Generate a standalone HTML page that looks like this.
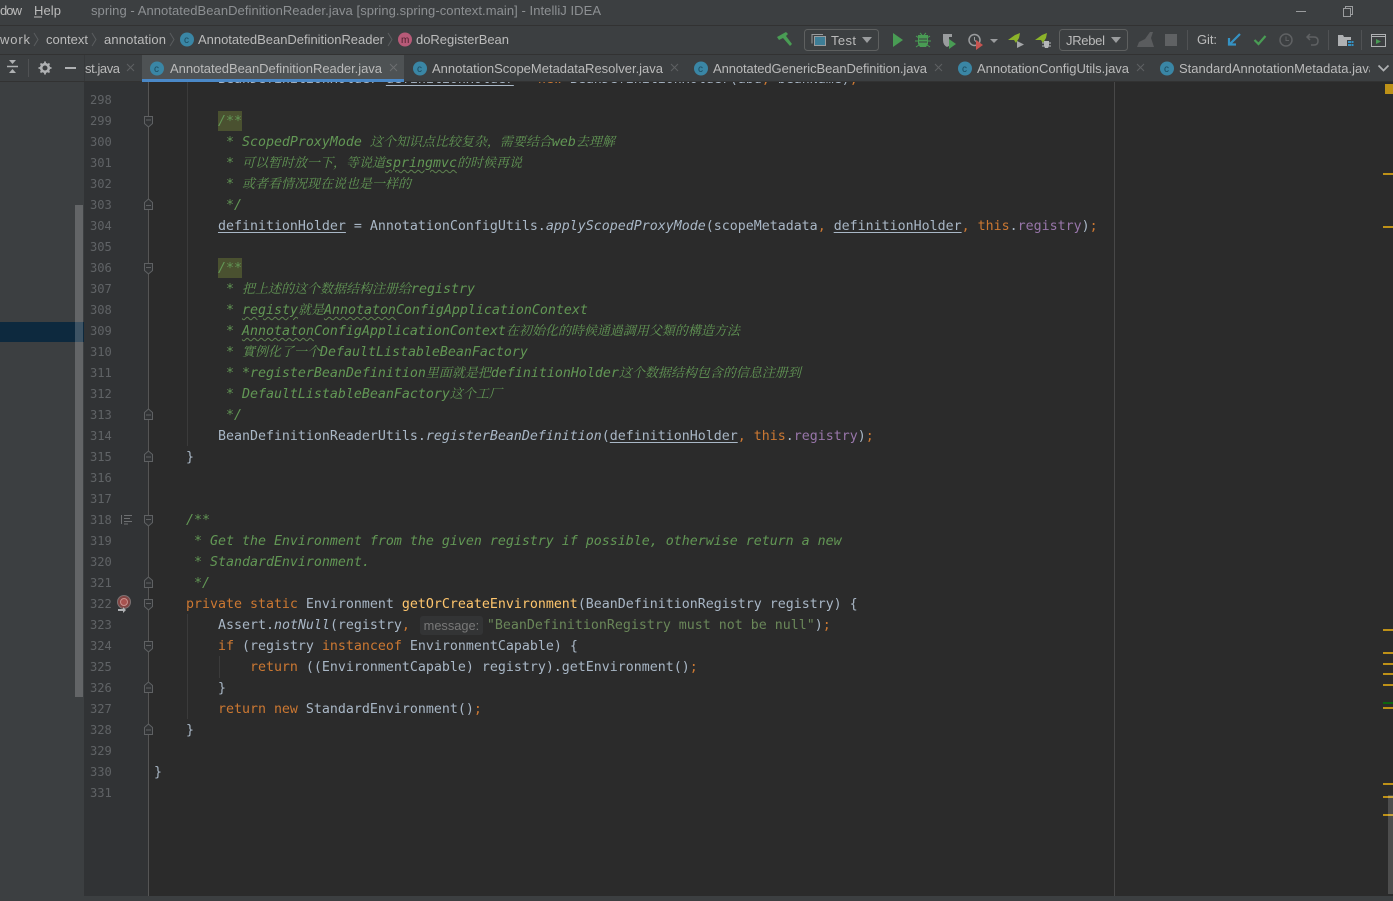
<!DOCTYPE html>
<html><head><meta charset="utf-8"><title>spring - AnnotatedBeanDefinitionReader.java</title>
<style>
html,body{margin:0;padding:0;width:1393px;height:901px;overflow:hidden;background:#2b2b2b}
.abs{position:absolute}
#left{left:0;top:82px;width:84px;height:814px;background:#3c3f41}
#sel{left:0;top:322px;width:84px;height:20px;background:#0d293e}
#lsb{left:75px;top:205px;width:8px;height:492px;background:rgba(255,255,255,.2)}
#gut{left:84px;top:82px;width:64px;height:814px;background:#313335}
#gl{left:148px;top:82px;width:1px;height:814px;background:#555}
#rm{left:1114px;top:82px;width:1px;height:814px;background:#484848}
#code{left:154px;width:1230px;height:828px;font:13.29px/21px "DejaVu Sans Mono","Liberation Mono",monospace;color:#a9b7c6;white-space:normal}
#clip{left:0;top:82px;width:1393px;height:814px;overflow:hidden}
#clip #code{top:-13px}
#code div{height:21px;white-space:pre}
#nums{left:90px;top:90px;font:12.1px/21px "DejaVu Sans Mono","Liberation Mono",monospace;color:#606366;white-space:pre}
.k{color:#cc7832}.d{color:#629755;font-style:italic}.m{color:#ffc66d}.s{color:#6a8759}.f{color:#9876aa}.i{font-style:italic}
.z{font-family:"Noto Serif CJK SC","Noto Sans CJK SC",serif;font-size:13px;line-height:13px}
.u{text-decoration:underline;text-underline-offset:2px;text-decoration-thickness:1px}
.w{text-decoration:underline wavy #5f8350 1px;text-underline-offset:2px}
.h{background:#4a5130;display:inline-block;height:20px;vertical-align:top}
.hint{display:inline-block;width:63px;height:19px;margin:1px 4px 0 2px;background:#333435;border-radius:3px;color:#787878;font:12.8px/19px "Liberation Sans",sans-serif;font-style:normal;text-align:center;vertical-align:top}
.st{position:absolute;left:1383px;width:10px;height:2px;background:#be9117}
.g{position:absolute;width:1px;background:#3b3b3b}
#status{left:0;top:896px;width:1393px;height:5px;background:#3c3f41}
#vsb{left:1388px;top:795px;width:5px;height:99px;background:rgba(255,255,255,.16)}
svg text{font-family:"Liberation Sans",sans-serif;font-size:13px;fill:#bbbbbb}
</style></head><body>
<div class="abs" id="left"></div><div class="abs" id="sel"></div><div class="abs" id="lsb"></div>
<div class="abs" id="gut"></div><div class="abs" id="gl"></div><div class="abs" id="rm"></div>
<div class="g" style="left:187px;top:82px;height:364px"></div>
<div class="g" style="left:187px;top:614px;height:105px"></div>
<div class="g" style="left:219px;top:656px;height:22px"></div>
<div class="abs" id="clip"><div class="abs" id="code"><div>        BeanDefinitionHolder <span class="u">definitionHolder</span> = <span class="k">new</span> BeanDefinitionHolder(abd<span class="k">,</span> beanName)<span class="k">;</span></div>
<div></div>
<div>        <span class="d"><span class="h">/**</span></span></div>
<div><span class="d">         * ScopedProxyMode <span class="z">这个知识点比较复杂，需要结合</span>web<span class="z">去理解</span></span></div>
<div><span class="d">         * <span class="z">可以暂时放一下，等说道</span><span class="w">springmvc</span><span class="z">的时候再说</span></span></div>
<div><span class="d">         * <span class="z">或者看情况现在说也是一样的</span></span></div>
<div><span class="d">         */</span></div>
<div>        <span class="u">definitionHolder</span> = AnnotationConfigUtils.<span class="i">applyScopedProxyMode</span>(scopeMetadata<span class="k">,</span> <span class="u">definitionHolder</span><span class="k">,</span> <span class="k">this</span>.<span class="f">registry</span>)<span class="k">;</span></div>
<div></div>
<div>        <span class="d"><span class="h">/**</span></span></div>
<div><span class="d">         * <span class="z">把上述的这个数据结构注册给</span>registry</span></div>
<div><span class="d">         * <span class="w">registy</span><span class="z">就是</span><span class="w">Annotaton</span>ConfigApplicationContext</span></div>
<div><span class="d">         * <span class="w">Annotaton</span>ConfigApplicationContext<span class="z">在初始化的時候通過調用父類的構造方法</span></span></div>
<div><span class="d">         * <span class="z">實例化了一个</span>DefaultListableBeanFactory</span></div>
<div><span class="d">         * *registerBeanDefinition<span class="z">里面就是把</span>definitionHolder<span class="z">这个数据结构包含的信息注册到</span></span></div>
<div><span class="d">         * DefaultListableBeanFactory<span class="z">这个工厂</span></span></div>
<div><span class="d">         */</span></div>
<div>        BeanDefinitionReaderUtils.<span class="i">registerBeanDefinition</span>(<span class="u">definitionHolder</span><span class="k">,</span> <span class="k">this</span>.<span class="f">registry</span>)<span class="k">;</span></div>
<div>    }</div>
<div></div>
<div></div>
<div>    <span class="d">/**</span></div>
<div><span class="d">     * Get the Environment from the given registry if possible, otherwise return a new</span></div>
<div><span class="d">     * StandardEnvironment.</span></div>
<div><span class="d">     */</span></div>
<div>    <span class="k">private static</span> Environment <span class="m">getOrCreateEnvironment</span>(BeanDefinitionRegistry registry) {</div>
<div>        Assert.<span class="i">notNull</span>(registry<span class="k">,</span> <span class="hint">message:</span><span class="s">"BeanDefinitionRegistry must not be null"</span>)<span class="k">;</span></div>
<div>        <span class="k">if</span> (registry <span class="k">instanceof</span> EnvironmentCapable) {</div>
<div>            <span class="k">return</span> ((EnvironmentCapable) registry).getEnvironment()<span class="k">;</span></div>
<div>        }</div>
<div>        <span class="k">return new</span> StandardEnvironment()<span class="k">;</span></div>
<div>    }</div>
<div></div>
<div>}</div>
</div></div>
<div class="abs" id="nums">298
299
300
301
302
303
304
305
306
307
308
309
310
311
312
313
314
315
316
317
318
319
320
321
322
323
324
325
326
327
328
329
330
331</div>
<svg class="abs" style="left:0;top:82px" width="160" height="814" viewBox="0 82 160 814" fill="none">
<g stroke="#5f6163" fill="#313335">
<path d="M144.500 116.500h8v7l-4 3.500l-4-3.500z"/><path d="M144.500 209.500h8v-7l-4-3.500l-4 3.500z"/>
<path d="M144.500 263.500h8v7l-4 3.500l-4-3.500z"/><path d="M144.500 419.500h8v-7l-4-3.500l-4 3.500z"/>
<path d="M144.500 461.500h8v-7l-4-3.500l-4 3.500z"/><path d="M144.500 515.500h8v7l-4 3.500l-4-3.500z"/>
<path d="M144.500 587.500h8v-7l-4-3.500l-4 3.500z"/><path d="M144.500 599.500h8v7l-4 3.500l-4-3.500z"/>
<path d="M144.500 641.500h8v7l-4 3.500l-4-3.500z"/><path d="M144.500 692.500h8v-7l-4-3.500l-4 3.500z"/>
<path d="M144.500 734.500h8v-7l-4-3.500l-4 3.500z"/>
<path d="M146 120h5M146 205.500h5M146 267.500h5M146 415h5M146 457h5M146 519.500h5M146 583h5M146 603.500h5M146 645.500h5M146 688h5M146 730h5"/>
</g>
<path d="M121.500 515v9M124 515.500h8M124 518.500h6M124 521.500h8M124 524h4" stroke="#6e7072"/>
<circle cx="124" cy="602" r="6.500" fill="#c75450" opacity=".55" stroke="#b9a5a5"/>
<circle cx="124" cy="602" r="3.500" fill="#a8524f" stroke="#c98f8c"/>
<path d="M118 609h5v-2l3 3l-3 3v-2h-5z" fill="#afb1b3"/>
</svg>
<div class="st" style="left:1385px;width:8px;top:84px;height:10px"></div>
<div class="st" style="top:173px"></div><div class="st" style="top:226px"></div>
<div class="st" style="top:629px"></div><div class="st" style="top:652px"></div><div class="st" style="top:663px"></div>
<div class="st" style="top:673px"></div><div class="st" style="top:684px"></div>
<div class="st" style="top:702px;background:#0c6410"></div><div class="st" style="top:707px"></div>
<div class="st" style="top:783px"></div><div class="st" style="top:796px"></div><div class="st" style="top:814px"></div>
<div class="abs" id="vsb"></div><div class="abs" id="status"></div>

<svg class="abs" style="left:0;top:0" width="1393" height="82" viewBox="0 0 1393 82" fill="none">
<rect width="1393" height="82" fill="#3c3f41"/>
<rect y="25" width="1393" height="1" fill="#323232"/>
<rect y="54" width="1393" height="1" fill="#323232"/>
<rect y="81" width="1393" height="1" fill="#323232"/>
<text x="0" y="15" textLength="22">dow</text>
<text x="34" y="15" textLength="27">Help</text><path d="M34 17h8" stroke="#bbb"/>
<text x="91" y="15" textLength="510" style="fill:#8d9093">spring - AnnotatedBeanDefinitionReader.java [spring.spring-context.main] - IntelliJ IDEA</text>
<path d="M1296 11.500h10" stroke="#9a9c9e"/>
<path d="M1343.500 8.500h7v8h-7zM1345.500 8.500v-2h7v8h-2" stroke="#9a9c9e"/>
<text x="0" y="44" textLength="30">work</text><path d="M34 33l4 6.500l-4 6.500" stroke="#5a5d5f"/>
<text x="46" y="44" textLength="42">context</text><path d="M92 33l4 6.500l-4 6.500" stroke="#5a5d5f"/>
<text x="104" y="44" textLength="62">annotation</text><path d="M170 33l4 6.500l-4 6.500" stroke="#5a5d5f"/>
<circle cx="187" cy="39.500" r="7" fill="#3a86a5"/><text x="184" y="43" style="font-size:10px;fill:#1c4a5e">c</text>
<text x="198" y="44" textLength="186">AnnotatedBeanDefinitionReader</text><path d="M388 33l4 6.500l-4 6.500" stroke="#5a5d5f"/>
<circle cx="405" cy="39.500" r="7" fill="#b85a78"/><text x="401" y="43" style="font-size:10px;fill:#4a1f2c">m</text>
<text x="416" y="44" textLength="93">doRegisterBean</text>
<path d="M777 37L786 32L788 34L786 36L792 44L790 46L783 38L779 40z" fill="#499c54"/>
<rect x="804.500" y="29.500" width="74" height="21" rx="3" stroke="#5e6060"/>
<rect x="814.500" y="36.500" width="11" height="9" stroke="#9a9c9e" fill="#3d7d96"/><path d="M812 43.500v-9h11" stroke="#9a9c9e"/>
<text x="831" y="45" textLength="25">Test</text><path d="M862 37h10l-5 6z" fill="#9a9c9e"/>
<path d="M893 33l10 7l-10 7z" fill="#499c54"/>
<path d="M918 35h10v9l-2 3h-6l-2-3z" fill="#499c54"/><path d="M916 36l3 2M930 36l-3 2M915 41h3M931 41h-3M916 47l3-2M930 47l-3-2M920 33l2 2M926 33l-2 2" stroke="#499c54"/><path d="M919 39h8M919 42h8" stroke="#3c3f41"/>
<path d="M943 34h9v3h-3v9l-2 1q-4-2-4-7z" fill="#9a9c9e"/><path d="M949 39l7 5l-7 5z" fill="#499c54"/>
<circle cx="974.500" cy="40" r="5.500" stroke="#9a9c9e" stroke-width="1.500"/><path d="M974.500 37v3l2 2" stroke="#9a9c9e"/><path d="M976 40l7 5l-7 5z" fill="#c75450"/>
<path d="M990 39h8l-4 4z" fill="#9a9c9e"/>
<path d="M1008 40l7-5l5-2l-1 5l-3 5l-2-3z" fill="#8cb32a"/><path d="M1017 41l7 3.500l-7 3.500z" fill="#a4a6a8"/>
<path d="M1035 40l7-5l5-2l-1 5l-3 5l-2-3z" fill="#8cb32a"/><path d="M1044 41h5v5l-1 2h-3l-1-2z" fill="#b5b7b9"/><path d="M1042 43h9M1042 46h9" stroke="#b5b7b9"/>
<rect x="1059.500" y="29.500" width="68" height="21" rx="3" stroke="#5e6060"/>
<text x="1066" y="45" textLength="39">JRebel</text><path d="M1111 37h10l-5 6z" fill="#9a9c9e"/>
<path d="M1137 47l2-5l6-3l5-7h3l-2 6l3 9z" fill="#5a5c5e"/>
<rect x="1165" y="34" width="12" height="12" fill="#5f6163"/>
<rect x="1187" y="30" width="1" height="20" fill="#505254"/>
<text x="1197" y="44" textLength="20">Git:</text>
<path d="M1240 34l-10 10M1229 38v6.500h7" stroke="#3592c4" stroke-width="2.200"/>
<path d="M1254.500 40l4 4l7-8" stroke="#499c54" stroke-width="2.200"/>
<circle cx="1286" cy="40" r="6" stroke="#5f6163" stroke-width="1.500"/><path d="M1286 36.500v4h3" stroke="#5f6163"/>
<path d="M1310 34l-3 3l3 3M1307 37h7q4 0 4 4t-4 4h-3" stroke="#5f6163" stroke-width="1.500"/>
<rect x="1328" y="30" width="1" height="20" fill="#505254"/>
<path d="M1338 35h5l1 2h7v3h-4v6h-9z" fill="#afb1b3"/><path d="M1348 41h3v2h-3zM1351.500 41h2v2h-2zM1348 44h3v2h-3zM1351.500 44h2v2h-2z" fill="#3592c4"/>
<rect x="1361" y="30" width="1" height="20" fill="#505254"/>
<rect x="1371.500" y="34.500" width="14" height="12" stroke="#afb1b3"/><path d="M1371.500 36.500h14" stroke="#afb1b3"/><path d="M1376 39l5 2.500l-5 2.500z" fill="#499c54"/>

<rect x="142" y="55" width="262" height="26" fill="#4e5254"/>
<rect x="142" y="79" width="262" height="3" fill="#4a88c7"/>
<rect x="84" y="55" width="1" height="26" fill="#36383a"/>
<path d="M7 66.500h11" stroke="#afb1b3" stroke-width="1.500"/><path d="M9 60h7l-3.500 4zM9 73h7l-3.500-4z" fill="#afb1b3"/>
<rect x="28" y="59" width="1" height="18" fill="#505254"/>
<circle cx="45" cy="68" r="3.800" stroke="#afb1b3" stroke-width="2.600"/><path d="M45 61.500v2M45 72.500v2M38.500 68h2M49.500 68h2M40.500 63.500l1.500 1.500M48 71l1.500 1.500M49.500 63.500l-1.500 1.500M42 71l-1.500 1.500" stroke="#afb1b3" stroke-width="1.800"/>
<path d="M65 68h11" stroke="#afb1b3" stroke-width="2"/>
<text x="85" y="73" textLength="35">st.java</text><path d="M127 64l7 7M134 64l-7 7" stroke="#5f6163"/>
<circle cx="157" cy="68.500" r="7" fill="#3a86a5"/><text x="154" y="72" style="font-size:10px;fill:#1c4a5e">c</text>
<text x="170" y="73" textLength="212">AnnotatedBeanDefinitionReader.java</text><path d="M390 64l7 7M397 64l-7 7" stroke="#6c6e70"/>
<circle cx="420" cy="68.500" r="7" fill="#3a86a5"/><text x="417" y="72" style="font-size:10px;fill:#1c4a5e">c</text>
<text x="432" y="73" textLength="231">AnnotationScopeMetadataResolver.java</text><path d="M671 64l7 7M678 64l-7 7" stroke="#5f6163"/>
<circle cx="701" cy="68.500" r="7" fill="#3a86a5"/><text x="698" y="72" style="font-size:10px;fill:#1c4a5e">c</text>
<text x="713" y="73" textLength="214">AnnotatedGenericBeanDefinition.java</text><path d="M935 64l7 7M942 64l-7 7" stroke="#5f6163"/>
<circle cx="965" cy="68.500" r="7" fill="#3a86a5"/><text x="962" y="72" style="font-size:10px;fill:#1c4a5e">c</text>
<text x="977" y="73" textLength="152">AnnotationConfigUtils.java</text><path d="M1137 64l7 7M1144 64l-7 7" stroke="#5f6163"/>
<circle cx="1167" cy="68.500" r="7" fill="#3a86a5"/><text x="1164" y="72" style="font-size:10px;fill:#1c4a5e">c</text>
<svg x="1179" y="55" width="191" height="26" viewBox="1179 55 191 26"><text x="1179" y="73" textLength="197">StandardAnnotationMetadata.java</text></svg>
<path d="M1378.500 65.500l5 5l5-5" stroke="#afb1b3" stroke-width="1.700"/>
</svg>
</body></html>
